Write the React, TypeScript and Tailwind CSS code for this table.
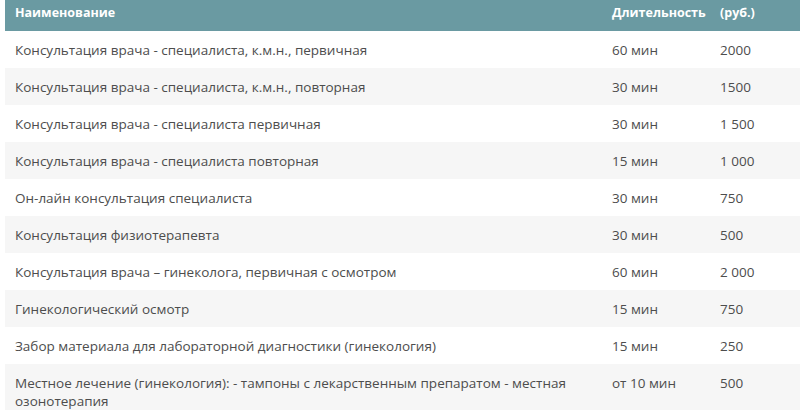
const rows: [string, string, string][] = [
  ['Консультация врача - специалиста, к.м.н., первичная', '60 мин', '2000'],
  ['Консультация врача - специалиста, к.м.н., повторная', '30 мин', '1500'],
  ['Консультация врача - специалиста первичная', '30 мин', '1 500'],
  ['Консультация врача - специалиста повторная', '15 мин', '1 000'],
  ['Он-лайн консультация специалиста', '30 мин', '750'],
  ['Консультация физиотерапевта', '30 мин', '500'],
  ['Консультация врача – гинеколога, первичная с осмотром', '60 мин', '2 000'],
  ['Гинекологический осмотр', '15 мин', '750'],
  ['Забор материала для лабораторной диагностики (гинекология)', '15 мин', '250'],
  ['Местное лечение (гинекология): - тампоны с лекарственным препаратом - местная озонотерапия', 'от 10 мин', '500'],
];

export default function App() {
  return (
    <div className="w-[800px] h-[410px] overflow-hidden bg-white pl-[5px] font-['Open_Sans',sans-serif]">
      <table className="w-[800px] table-fixed border-collapse -mt-[6px]">
        <colgroup>
          <col className="w-[597px]" />
          <col className="w-[108px]" />
          <col />
        </colgroup>
        <thead>
          <tr className="bg-[#6a9aa2] text-white text-[12.5px] font-bold leading-[17px]">
            <th className="text-left pl-[10px] pr-2 py-[10px]">Наименование</th>
            <th className="text-left pl-[10px] py-[10px]">Длительность</th>
            <th className="text-left pl-[10px] py-[10px]">(руб.)</th>
          </tr>
        </thead>
        <tbody className="text-[13.5px] leading-[18px] text-[#4d4d4d]">
          {rows.map(([name, dur, price], i) => (
            <tr key={i} className={i % 2 === 1 ? 'bg-[#f6f6f6]' : 'bg-white'}>
              <td className="pl-[10px] pr-[10px] py-[9.5px] align-top">{name}</td>
              <td className="pl-[10px] py-[9.5px] align-top">{dur}</td>
              <td className="pl-[10px] py-[9.5px] align-top">{price}</td>
            </tr>
          ))}
        </tbody>
      </table>
    </div>
  );
}
